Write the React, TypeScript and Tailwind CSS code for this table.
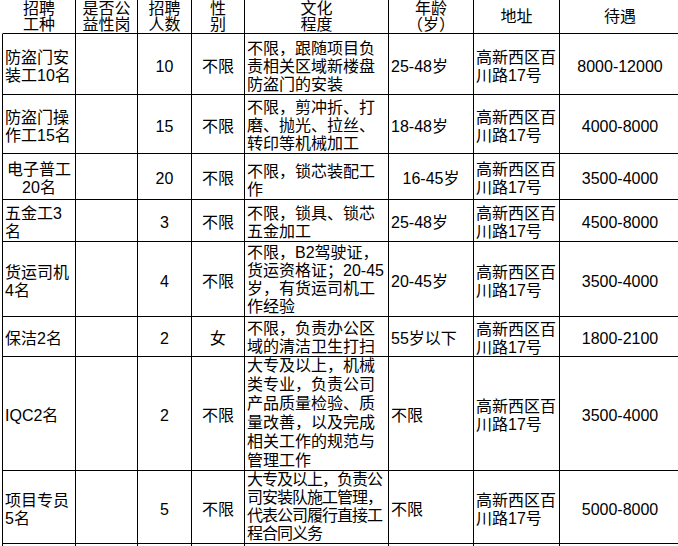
import React from "react";

type C = { t: string[]; a?: "l" | "c"; v?: "c" | "b"; x?: string };

const GRID =
  "grid grid-cols-[73px_62px_54px_53px_144px_85px_86px_121px] border-b border-black";

const addr: C = { t: ["高新西区百", "川路17号"] };

const rows: { h: string; cells: C[] }[] = [
  {
    h: "h-[61px]",
    cells: [
      { t: ["防盗门安", "装工10名"] },
      { t: [] },
      { t: ["10"], a: "c" },
      { t: ["不限"], a: "c" },
      { t: ["不限，跟随项目负", "责相关区域新楼盘", "防盗门的安装"], v: "b" },
      { t: ["25-48岁"] },
      addr,
      { t: ["8000-12000"], a: "c" },
    ],
  },
  {
    h: "h-[59px]",
    cells: [
      { t: ["防盗门操", "作工15名"] },
      { t: [] },
      { t: ["15"], a: "c" },
      { t: ["不限"], a: "c" },
      { t: ["不限，剪冲折、打", "磨、抛光、拉丝、", "转印等机械加工"], v: "b" },
      { t: ["18-48岁"] },
      addr,
      { t: ["4000-8000"], a: "c" },
    ],
  },
  {
    h: "h-[46px]",
    cells: [
      { t: ["电子普工", "20名"], a: "c" },
      { t: [] },
      { t: ["20"], a: "c" },
      { t: ["不限"], a: "c" },
      { t: ["不限，锁芯装配工", "作"], v: "b" },
      { t: ["16-45岁"], a: "c" },
      addr,
      { t: ["3500-4000"], a: "c" },
    ],
  },
  {
    h: "h-[42px]",
    cells: [
      { t: ["五金工3", "名"] },
      { t: [] },
      { t: ["3"], a: "c" },
      { t: ["不限"], a: "c" },
      { t: ["不限，锁具、锁芯", "五金加工"], v: "b" },
      { t: ["25-48岁"] },
      addr,
      { t: ["4500-8000"], a: "c" },
    ],
  },
  {
    h: "h-[75px]",
    cells: [
      { t: ["货运司机", "4名"] },
      { t: [] },
      { t: ["4"], a: "c" },
      { t: ["不限"], a: "c" },
      {
        t: ["不限，B2驾驶证，", "货运资格证；20-45", "岁，有货运司机工", "作经验"],
        v: "b",
      },
      { t: ["20-45岁"] },
      addr,
      { t: ["3500-4000"], a: "c" },
    ],
  },
  {
    h: "h-[40px]",
    cells: [
      { t: ["保洁2名"] },
      { t: [] },
      { t: ["2"], a: "c" },
      { t: ["女"], a: "c" },
      { t: ["不限，负责办公区", "域的清洁卫生打扫"], v: "b" },
      { t: ["55岁以下"] },
      addr,
      { t: ["1800-2100"], a: "c" },
    ],
  },
  {
    h: "h-[114px]",
    cells: [
      { t: ["IQC2名"] },
      { t: [] },
      { t: ["2"], a: "c" },
      { t: ["不限"], a: "c" },
      {
        t: [
          "大专及以上，机械",
          "类专业，负责公司",
          "产品质量检验、质",
          "量改善，以及完成",
          "相关工作的规范与",
          "管理工作",
        ],
        v: "b",
        x: "leading-[19px]",
      },
      { t: ["不限"] },
      addr,
      { t: ["3500-4000"], a: "c" },
    ],
  },
  {
    h: "h-[73px]",
    cells: [
      { t: ["项目专员", "5名"] },
      { t: [] },
      { t: ["5"], a: "c" },
      { t: ["不限"], a: "c" },
      {
        t: ["大专及以上，负责公", "司安装队施工管理，", "代表公司履行直接工", "程合同义务"],
        v: "b",
        x: "tracking-[-1px]",
      },
      { t: ["不限"] },
      addr,
      { t: ["5000-8000"], a: "c" },
    ],
  },
];

const headers = [
  ["招聘", "工种"],
  ["是否公", "益性岗"],
  ["招聘", "人数"],
  ["性", "别"],
  ["文化", "程度"],
  ["年龄", "（岁）"],
  ["地址"],
  ["待遇"],
];

function Cell({ c }: { c: C }) {
  const align = c.a === "c" ? "items-center text-center" : "items-start pl-[2px]";
  const v = c.v === "b" ? "justify-end" : "justify-center pt-[5px]";
  return (
    <div
      className={`flex flex-col overflow-hidden border-r border-black leading-[18px] ${align} ${v} ${c.x ?? ""}`}
    >
      {c.t.map((l, i) => (
        <div key={i} className="whitespace-nowrap">
          {l}
        </div>
      ))}
    </div>
  );
}

export default function App() {
  return (
    <div className="w-[678px] h-[546px] overflow-hidden bg-white text-black text-[16px] font-['Liberation_Sans','Noto_Sans_CJK_SC',sans-serif]">
      <div className="ml-[2px] w-[679px]">
        <div className={`${GRID} h-[34px] border-l border-l-transparent`}>
          {headers.map((h, i) => (
            <div
              key={i}
              className="flex flex-col items-center justify-center overflow-hidden border-r border-black pt-[1px] leading-[16px] text-center"
            >
              {h.map((l, j) => (
                <div key={j} className="whitespace-nowrap">
                  {l}
                </div>
              ))}
            </div>
          ))}
        </div>
        {rows.map((r, i) => (
          <div key={i} className={`${GRID} ${r.h} border-l border-l-black`}>
            {r.cells.map((c, j) => (
              <Cell key={j} c={c} />
            ))}
          </div>
        ))}
        <div className={`${GRID} h-[40px] border-l border-l-black`}>
          {Array.from({ length: 8 }).map((_, j) => (
            <div key={j} className="border-r border-black" />
          ))}
        </div>
      </div>
    </div>
  );
}
